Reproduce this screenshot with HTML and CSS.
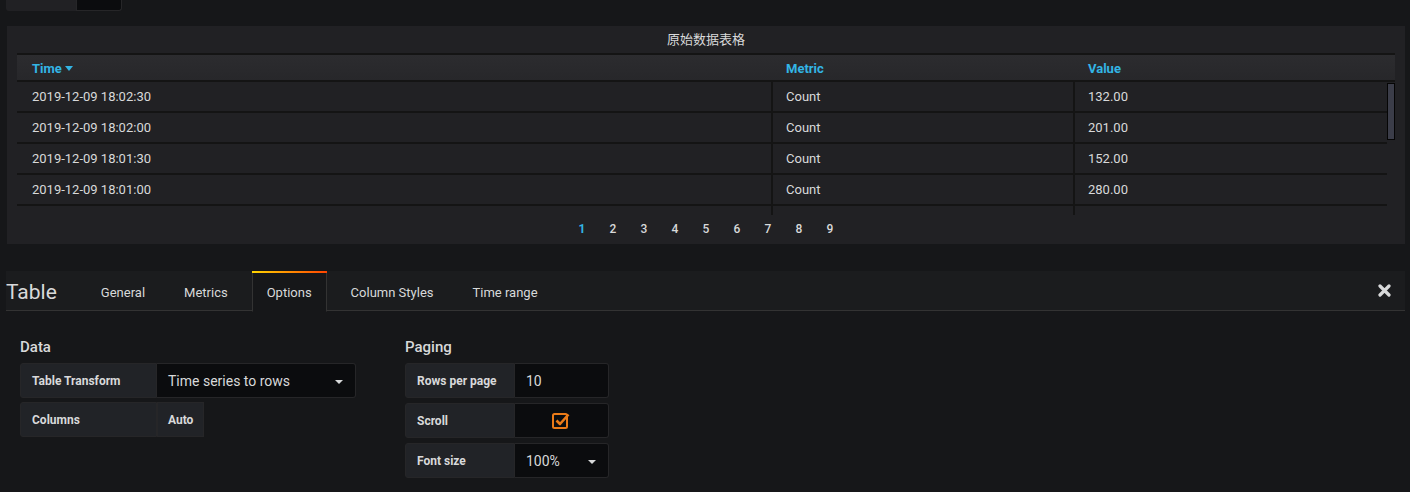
FILE: index.html
```html
<!DOCTYPE html>
<html lang="zh-CN">
<head>
    <meta charset="UTF-8">
    <title>Table</title>
    <link rel="stylesheet" href="styles.css">
</head>
<body>
    <div class="top-stub">
        <div class="stub-label"></div>
        <div class="stub-input"></div>
    </div>

    <div class="panel">
        <div class="panel-title">原始数据表格</div>
        <div class="table">
            <div class="table-head">
                <div class="col col-time">Time <span class="sort-caret"></span></div>
                <div class="col col-metric">Metric</div>
                <div class="col col-value">Value</div>
            </div>
            <div class="table-scroll">
                <div class="table-rows">
                    <div class="row">
                        <div class="col col-time">2019-12-09 18:02:30</div>
                        <div class="col col-metric">Count</div>
                        <div class="col col-value">132.00</div>
                    </div>
                    <div class="row">
                        <div class="col col-time">2019-12-09 18:02:00</div>
                        <div class="col col-metric">Count</div>
                        <div class="col col-value">201.00</div>
                    </div>
                    <div class="row">
                        <div class="col col-time">2019-12-09 18:01:30</div>
                        <div class="col col-metric">Count</div>
                        <div class="col col-value">152.00</div>
                    </div>
                    <div class="row">
                        <div class="col col-time">2019-12-09 18:01:00</div>
                        <div class="col col-metric">Count</div>
                        <div class="col col-value">280.00</div>
                    </div>
                    <div class="row row-filler">
                        <div class="col col-time"></div>
                        <div class="col col-metric"></div>
                        <div class="col col-value"></div>
                    </div>
                </div>
                <div class="scroll-track">
                    <div class="scroll-thumb"></div>
                </div>
            </div>
            <div class="pagination">
                <a class="page active">1</a>
                <a class="page">2</a>
                <a class="page">3</a>
                <a class="page">4</a>
                <a class="page">5</a>
                <a class="page">6</a>
                <a class="page">7</a>
                <a class="page">8</a>
                <a class="page">9</a>
            </div>
        </div>
    </div>

    <div class="editor">
        <div class="editor-header">
            <div class="editor-title">Table</div>
            <ul class="tabs">
                <li class="tab">General</li>
                <li class="tab">Metrics</li>
                <li class="tab active">Options</li>
                <li class="tab">Column Styles</li>
                <li class="tab">Time range</li>
            </ul>
            <div class="close-btn">
                <svg width="13" height="13" viewBox="0 0 13 13">
                    <path d="M2 2 L11 11 M11 2 L2 11" stroke="#d8d9da" stroke-width="3.2" stroke-linecap="round"/>
                </svg>
            </div>
        </div>

        <div class="editor-body">
            <div class="section section-data">
                <h5 class="section-heading">Data</h5>
                <div class="form">
                    <label class="form-label w-data">Table Transform</label>
                    <div class="form-select w-transform">
                        <span>Time series to rows</span>
                        <span class="caret"></span>
                    </div>
                </div>
                <div class="form">
                    <label class="form-label w-data">Columns</label>
                    <label class="form-label form-label-plain">Auto</label>
                </div>
            </div>

            <div class="section section-paging">
                <h5 class="section-heading">Paging</h5>
                <div class="form">
                    <label class="form-label w-paging">Rows per page</label>
                    <div class="form-input w-paging-input">10</div>
                </div>
                <div class="form">
                    <label class="form-label w-paging">Scroll</label>
                    <div class="form-input w-paging-input checkbox-cell">
                        <svg width="19" height="18" viewBox="0 0 19 18">
                            <rect x="1" y="3" width="14" height="14" rx="1.5" fill="none" stroke="#eb7b18" stroke-width="2"/>
                            <path d="M4.5 9.5 L8 13 L16.5 3.5" fill="none" stroke="#eb7b18" stroke-width="2.6" stroke-linejoin="round"/>
                        </svg>
                    </div>
                </div>
                <div class="form">
                    <label class="form-label w-paging">Font size</label>
                    <div class="form-select w-paging-input">
                        <span>100%</span>
                        <span class="caret"></span>
                    </div>
                </div>
            </div>
        </div>
    </div>
</body>
</html>
```

FILE: styles.css
```css
:root {
    --pageBg: #161719;
    --panelBg: #212124;
    --textColor: #d8d9da;
    --linkBlue: #33b5e5;
    --inputBg: #0b0c0e;
    --formBorder: #262628;
    --labelBg: #212327;
}

* {
    box-sizing: border-box;
    margin: 0;
    padding: 0;
}

body {
    background: var(--pageBg);
    color: var(--textColor);
    font-family: Roboto, "Noto Sans CJK SC", sans-serif;
    font-size: 13px;
}

/* 顶部残留的表单 */
.top-stub {
    display: flex;
    margin-left: 6px;
    width: 116px;
    height: 11px;
}

.stub-label {
    width: 70px;
    background: var(--panelBg);
    border-radius: 0 0 0 3px;
}

.stub-input {
    flex: 1;
    background: var(--inputBg);
    border: 1px solid var(--formBorder);
    border-top: none;
    border-radius: 0 0 3px 0;
}

/* 面板 */
.panel {
    margin: 15px 5px 0 7px;
    height: 218px;
    background: var(--panelBg);
    padding: 0 10px;
}

.panel-title {
    height: 27px;
    line-height: 25px;
    text-align: center;
    font-size: 13px;
    font-family: "Noto Sans CJK SC", Roboto, sans-serif;
}

.table-head {
    display: flex;
    height: 29px;
    padding-top: 1px;
    border-top: 2px solid #141414;
    border-bottom: 2px solid #141414;
    background: linear-gradient(#2c2c2f, #27272a);
    color: var(--linkBlue);
    font-weight: 700;
    align-items: center;
}

.col {
    padding-left: 13px;
}

.col-time {
    width: 756px;
    padding-left: 15px;
}

.col-metric {
    width: 302px;
}

.col-value {
    flex: 1;
}

.sort-caret {
    display: inline-block;
    width: 0;
    height: 0;
    border-left: 4px solid transparent;
    border-right: 4px solid transparent;
    border-top: 5px solid var(--linkBlue);
    vertical-align: 2px;
}

.table-scroll {
    display: flex;
    height: 133px;
}

.table-rows {
    flex: 1;
}

.row {
    display: flex;
    height: 31px;
    border-bottom: 2px solid #141414;
}

.row .col {
    display: flex;
    align-items: center;
}

.row .col-time,
.row .col-metric {
    border-right: 2px solid #141414;
}

.row-filler {
    height: 9px;
    border-bottom: none;
}

.scroll-track {
    width: 8px;
}

.scroll-thumb {
    margin-top: 1px;
    height: 57px;
    background: #3b3d49;
    border: 1px solid #050505;
}

.pagination {
    display: flex;
    justify-content: center;
    height: 27px;
    align-items: center;
}

.page {
    width: 31px;
    text-align: center;
    font-size: 12px;
    font-weight: 500;
    color: var(--textColor);
}

.page.active {
    color: var(--linkBlue);
    font-weight: 700;
}

/* 编辑区域 */
.editor {
    margin: 27px 5px 0 6px;
}

.editor-header {
    display: flex;
    align-items: stretch;
    height: 40px;
    background: #1b1c1e;
    border-bottom: 1px solid #333;
}

.editor-title {
    font-size: 21px;
    line-height: 42px;
    margin-right: 29px;
}

.tabs {
    display: flex;
    list-style: none;
    flex: 1;
}

.tab {
    padding: 0 14px;
    margin-right: 9px;
    line-height: 40px;
    font-size: 13px;
    border: 1px solid transparent;
    border-top: 2px solid transparent;
}

.tab.active {
    background: var(--pageBg);
    border-color: #333;
    border-bottom-color: var(--pageBg);
    border-top: none;
    height: 41px;
    position: relative;
    line-height: 39px;
    padding-top: 2px;
}

.tab.active::before {
    content: "";
    position: absolute;
    left: -1px;
    right: -1px;
    top: 0;
    height: 2px;
    background: linear-gradient(to right, #ffd500, #ff4400);
}

.close-btn {
    display: flex;
    align-items: center;
    margin-right: 14px;
    padding-bottom: 1px;
}

.editor-body {
    display: flex;
    padding: 26px 0 0 14px;
    gap: 49px;
}

.section-heading {
    font-size: 15px;
    font-weight: 500;
    line-height: 20px;
    margin-bottom: 6px;
}

.form {
    display: flex;
    margin-bottom: 4px;
}

.section-paging .form {
    margin-bottom: 5px;
}

.form-label {
    display: flex;
    align-items: center;
    height: 35px;
    padding-left: 11px;
    background: var(--labelBg);
    border: 1px solid var(--formBorder);
    border-radius: 3px 0 0 3px;
    font-size: 12px;
    font-weight: 700;
}

.form-label-plain {
    border-radius: 0;
    padding: 0 10px;
}

.w-data {
    width: 137px;
}

.w-paging {
    width: 110px;
}

.form-select,
.form-input {
    display: flex;
    align-items: center;
    justify-content: space-between;
    height: 35px;
    padding: 0 12px 0 11px;
    background: var(--inputBg);
    border: 1px solid var(--formBorder);
    border-left: none;
    border-radius: 0 3px 3px 0;
    font-size: 14px;
}

.w-transform {
    width: 199px;
}

.w-paging-input {
    width: 94px;
}

.checkbox-cell {
    justify-content: center;
    padding: 0 0 2px 0;
}

.caret {
    width: 0;
    height: 0;
    border-left: 4px solid transparent;
    border-right: 4px solid transparent;
    border-top: 4px solid var(--textColor);
    margin-top: 2px;
}
```
